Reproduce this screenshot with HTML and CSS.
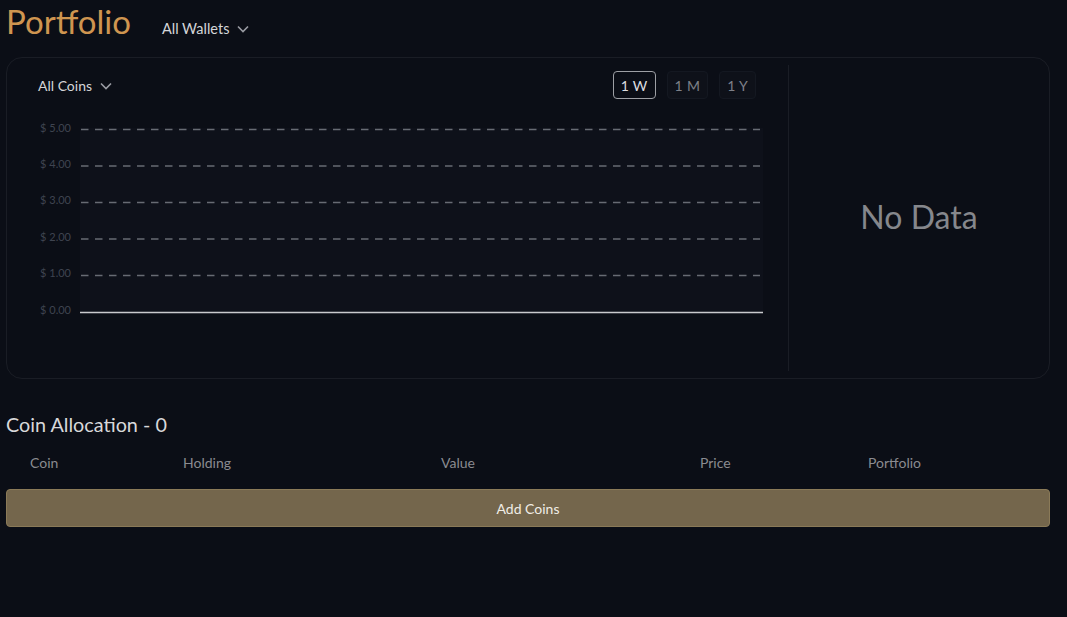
FILE: index.html
```html
<!DOCTYPE html>
<html lang="en">
<head>
<meta charset="utf-8">
<title>Portfolio</title>
<link rel="stylesheet" href="styles.css">
</head>
<body>
<div class="page">
  <header class="top">
    <h1 class="title">Portfolio</h1>
    <button class="select">All Wallets
      <svg class="chev" width="12" height="8" viewBox="0 0 12 8"><polyline points="1,1.5 6,6.5 11,1.5" fill="none" stroke="#9a9ca3" stroke-width="1.6"/></svg>
    </button>
  </header>

  <section class="card">
    <div class="chart-panel">
      <div class="chart-head">
        <button class="select small">All Coins
          <svg class="chev" width="12" height="8" viewBox="0 0 12 8"><polyline points="1,1.5 6,6.5 11,1.5" fill="none" stroke="#9a9ca3" stroke-width="1.6"/></svg>
        </button>
        <div class="ranges">
          <button class="range active">1 W</button>
          <button class="range">1 M</button>
          <button class="range">1 Y</button>
        </div>
      </div>
      <svg class="chart" width="750" height="250" viewBox="0 0 750 250">
        <rect x="42" y="18" width="683" height="186" fill="#0e111a"/>
        <g class="labels" font-family="Lato, sans-serif" font-size="11" fill="#3f4450" text-anchor="end">
          <text x="33" y="22">$ 5.00</text>
          <text x="33" y="58">$ 4.00</text>
          <text x="33" y="94">$ 3.00</text>
          <text x="33" y="131">$ 2.00</text>
          <text x="33" y="167">$ 1.00</text>
          <text x="33" y="204">$ 0.00</text>
        </g>
        <g stroke="#676b73" stroke-width="1.3" stroke-dasharray="7.5 6.5">
          <line x1="43" y1="19.5" x2="722" y2="19.5"/>
          <line x1="43" y1="56" x2="722" y2="56"/>
          <line x1="43" y1="92.5" x2="722" y2="92.5"/>
          <line x1="43" y1="129" x2="722" y2="129"/>
          <line x1="43" y1="165.5" x2="722" y2="165.5"/>
        </g>
        <line x1="42" y1="202.5" x2="725" y2="202.5" stroke="#c9cacd" stroke-width="1.6"/>
      </svg>
    </div>
    <div class="pie-panel">
      <span class="no-data">No Data</span>
    </div>
  </section>

  <h2 class="alloc">Coin Allocation - 0</h2>
  <div class="thead">
    <span>Coin</span>
    <span>Holding</span>
    <span>Value</span>
    <span>Price</span>
    <span>Portfolio</span>
  </div>
  <button class="add">Add Coins</button>
</div>
</body>
</html>
```

FILE: styles.css
```css
* { box-sizing: border-box; }
html, body {
  margin: 0;
  padding: 0;
  background: #0b0e16;
  font-family: Lato, "Noto Sans", sans-serif;
  color: #d6d6d8;
}
.page {
  width: 1050px;
  padding-left: 6px;
}
button {
  font-family: inherit;
  cursor: pointer;
}
.top {
  display: flex;
  align-items: baseline;
  gap: 31px;
  height: 42px;
}
.title {
  margin: 0;
  font-size: 33px;
  line-height: 42px;
  font-weight: 400;
  color: #cf9550;
}
.select {
  background: none;
  border: none;
  padding: 0;
  color: #d4d5d8;
  font-size: 14.5px;
  display: inline-flex;
  align-items: center;
  gap: 8px;
}
.select.small { font-size: 14px; }
.chev { display: block; margin-top: 1px; }
.card {
  margin-top: 15px;
  width: 1044px;
  height: 322px;
  border: 1px solid #1a1d25;
  border-radius: 16px;
  display: flex;
}
.chart-panel {
  width: 781px;
  padding: 13px 32px 0 31px;
}
.chart-head {
  display: flex;
  justify-content: space-between;
  align-items: center;
  height: 28px;
}
.ranges {
  display: flex;
  gap: 11px;
}
.range {
  height: 28px;
  padding: 0 7px;
  border: 1px solid #141821;
  border-radius: 4px;
  background: #0e1119;
  color: #7d8088;
  font-size: 14px;
  letter-spacing: 0.3px;
}
.range.active {
  border-color: #9d9fa4;
  background: none;
  color: #dcdde0;
}
.chart {
  display: block;
  margin-top: 11px;
}
.pie-panel {
  flex: 1;
  margin: 7px 0;
  border-left: 1px solid #1a1d25;
  display: flex;
  align-items: center;
  justify-content: center;
  padding-bottom: 4px;
}
.no-data {
  font-size: 32px;
  color: #85878c;
}
.alloc {
  margin: 31px 0 0;
  font-size: 19.8px;
  line-height: 28px;
  font-weight: 400;
  color: #d8d8da;
}
.thead {
  margin-top: 15px;
  width: 1044px;
  display: grid;
  grid-template-columns: 153px 258px 259px 168px 1fr;
  padding-left: 24px;
  font-size: 14px;
  line-height: 20px;
  color: #8a8b90;
}
.add {
  display: block;
  margin-top: 16px;
  width: 1044px;
  height: 38px;
  background: #74664c;
  border: 1px solid #8a7a58;
  border-radius: 4px;
  color: #f0ede6;
  font-size: 14px;
}
```
